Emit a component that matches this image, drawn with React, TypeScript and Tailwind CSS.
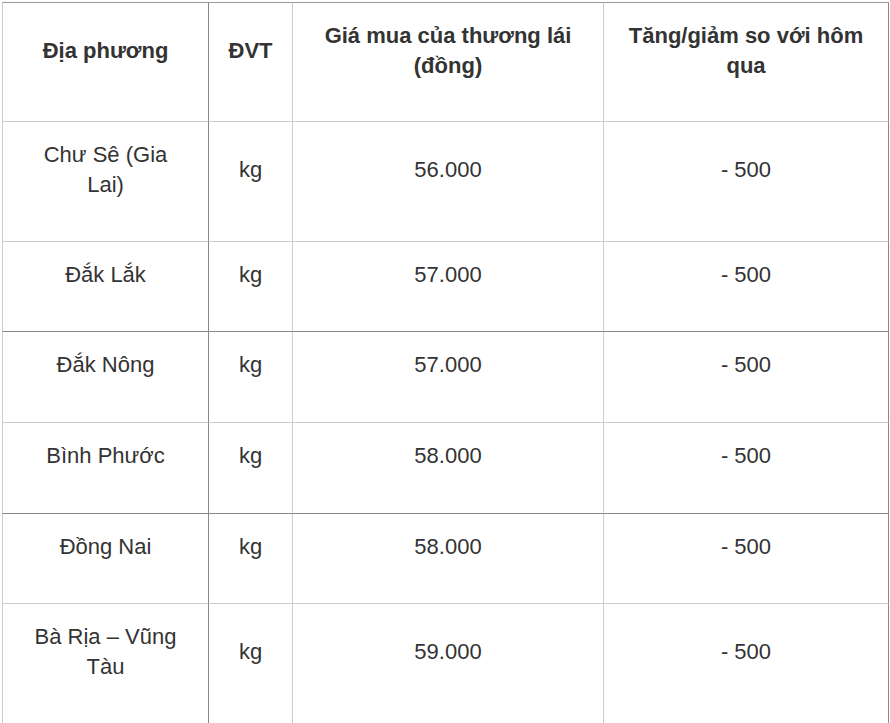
import React from "react";

const header = ["Địa phương", "ĐVT", "Giá mua của thương lái (đồng)", "Tăng/giảm so với hôm qua"];
const rows: string[][] = [
  ["Chư Sê (Gia Lai)", "kg", "56.000", "- 500"],
  ["Đắk Lắk", "kg", "57.000", "- 500"],
  ["Đắk Nông", "kg", "57.000", "- 500"],
  ["Bình Phước", "kg", "58.000", "- 500"],
  ["Đồng Nai", "kg", "58.000", "- 500"],
  ["Bà Rịa – Vũng Tàu", "kg", "59.000", "- 500"],
];

const darkBottom = (r: number) => r === 1 || r === 3;

const colBorder = (c: number) =>
  c === 0
    ? "border-l border-l-[#cccccc] border-r-[#888888] "
    : c === 3
    ? "border-r-[#888888] "
    : "border-r-[#cccccc] ";

export default function App() {
  return (
    <div className="bg-white w-[890px] h-[723px] overflow-hidden pl-[2px] pt-[2px]" style={{ fontFamily: '"Liberation Sans", Arial, sans-serif' }}>
      <div className="grid grid-cols-[207px_84px_311px_285px] text-[#333] text-[22px] leading-[30px] text-center">
        {header.map((h, c) => (
          <div
            key={"h" + c}
            className={
              "flex items-center justify-center font-bold pt-[18px] pb-[40px] px-[20px] border-t border-t-[#9a9a9a] border-b border-b-[#cccccc] border-r " +
              colBorder(c)
            }
          >
            <span>{h}</span>
          </div>
        ))}
        {rows.map((row, r) =>
          row.map((cell, c) => (
            <div
              key={r + "-" + c}
              className={
                "flex items-center justify-center pt-[18px] px-[20px] border-b border-r " +
                (darkBottom(r) ? "border-b-[#888888] " : "border-b-[#cccccc] ") +
                colBorder(c) +
                (r === 2 || r === 3 ? "pb-[42px] " : "pb-[41px] ")
              }
            >
              <span>{cell}</span>
            </div>
          ))
        )}
      </div>
    </div>
  );
}
